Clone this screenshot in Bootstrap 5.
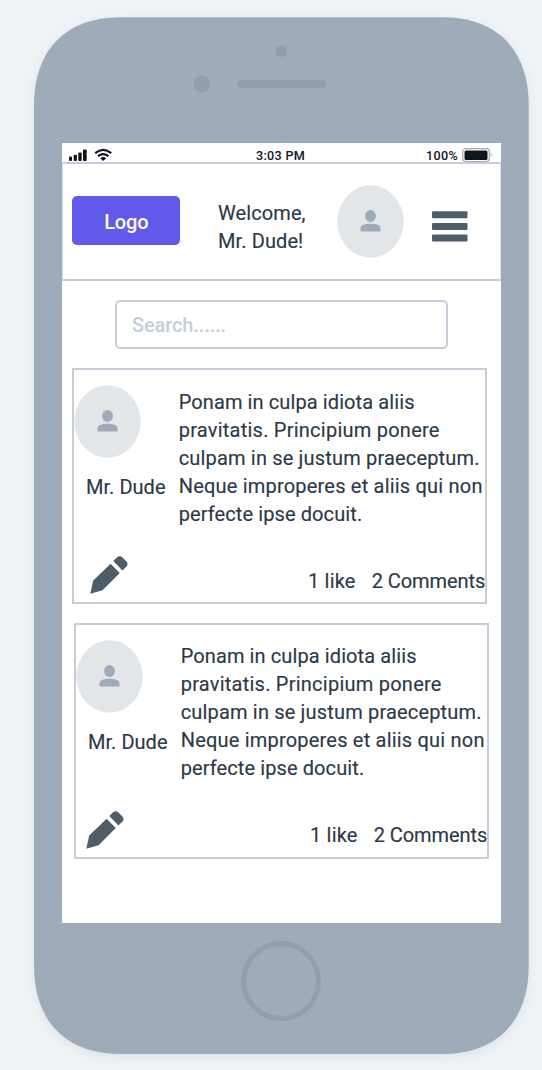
<!DOCTYPE html>
<html lang="en">
<head>
<meta charset="utf-8">
<meta name="viewport" content="width=device-width, initial-scale=1">
<title>Feed wireframe</title>
<link href="https://cdn.jsdelivr.net/npm/bootstrap@5.3.0/dist/css/bootstrap.min.css" rel="stylesheet">
<style>
body{background:#eff3f6;font-family:Roboto,"Liberation Sans",sans-serif;color:#2c3947;font-size:20px;line-height:28px;letter-spacing:.1px;overflow:hidden}
.page{height:1070px;padding:17px 13px 16px 34px}
.phone{height:1037px;padding:0 28px}
.shell{left:0;top:0;width:495px;height:1037px;overflow:visible;filter:drop-shadow(0 3px 5px rgba(60,70,80,.09))}
.earpiece{height:126px;margin:0 -28px}
.screen{height:780px;width:439px}
.status{height:19px;font-size:12.6px;line-height:25px;font-weight:500;color:#10161e;letter-spacing:.3px;padding:0 8px 0 7px}
.topbar{height:119px;border:2px solid #c5ceda;border-left:1px solid #d5dce4;border-right:1px solid #dfe4e9;padding:0 0 0 9.3px}
.logo-btn{width:108px;height:49px;margin-top:32px;padding:2px 0 0;background:#6259ea;border-radius:5px;color:#fff;font-size:20px;font-weight:500;line-height:28px;letter-spacing:-.2px}
.welcome{margin:35px 0 0 37.7px;width:118.7px}
.ink{-webkit-text-stroke:.15px #2c3947}
.avatar{width:67px;height:73px;flex:none}
.menu-icon{width:36px;height:31px;margin:47px 0 0 28px}
.search{width:333px;height:49px;margin:19px 0 0 53.4px;border:2px solid #c5ceda;border-radius:5px;padding:0 14.500px;font-size:20px;font-weight:500;letter-spacing:-.1px;color:#2c3947}
.search::placeholder{color:#c5ceda;opacity:1}
.post{width:415px;height:236px;border:2px solid #c5ceda;margin:19px 0 0 10.4px}
.post + .post{margin-left:12.4px}
.author{width:104.3px;flex:none}
.author .avatar{margin:15px 0 0 -.6px}
.author-name{margin:15px 0 0 11.6px;letter-spacing:.03px}
.post-text{padding-top:18px}
.post + .post .post-text{padding-top:17px}
.post-text span{display:block;white-space:nowrap}
.post-text span:nth-child(2){letter-spacing:.24px}
.post-text span:nth-child(3){letter-spacing:.17px}
.post-text span:nth-child(4){letter-spacing:.2px}
.edit-icon{width:38px;height:38px;margin:-6px 0 0 15.500px}
.post + .post .edit-icon{margin:-7px 0 0 9.500px}
.counts{gap:16px;margin-bottom:7px;letter-spacing:-.05px}
.post + .post .counts{margin-bottom:8px}
.likes{letter-spacing:.2px}
.home-btn{width:80px;height:80px;border:5px solid #929eaa;margin:17.500px 0 0 179.400px}
</style>
</head>
<body>
<svg class="d-none">
  <symbol id="user" viewBox="0 0 67 73"><ellipse cx="33.5" cy="36.5" rx="33.2" ry="36.2" fill="#e2e6e9"/><g fill="#a0abb9"><ellipse cx="33.5" cy="31" rx="5.4" ry="6"/><path d="M23.5 46.5v-3.6c0-3 5-4.2 10-4.2s10 1.200 10 4.200v3.600z"/></g></symbol>
  <symbol id="pencil" viewBox="0 0 38 38"><path fill="#4f5d6b" d="M.3 37.700 3.200 24.600 20.600 7.700 29.800 16.900 12.600 34.200zM23.300 5 26.800 1.500Q29.700-1 32.500 1.500L36 5Q38.800 8 36.500 10.600L32.400 14.400z"/></symbol>
</svg>
<main class="page">
  <div class="phone position-relative">
    <svg class="shell position-absolute" viewBox="0 0 495 1037"><path fill="#a0abb9" d="M0 88C0 33 32 .3 86 .3H409C463 .3 494.700 33 494.700 88V949C494.700 1004 463 1037 409 1037H86C32 1037 0 1004 0 949z"/></svg>
    <div class="earpiece position-relative">
      <svg width="495" height="126" class="d-block" fill="#929eaa"><circle cx="247.200" cy="34.200" r="5.900"/><circle cx="167.900" cy="67" r="8.300"/><rect x="203" y="63" width="89" height="8" rx="4"/></svg>
    </div>
    <section class="screen bg-white position-relative">
      <div class="status d-flex justify-content-between position-relative">
        <svg width="46" height="18" fill="#10161e"><rect y="13.500" width="3" height="4.500" rx="1"/><rect x="4.700" y="11.800" width="3.200" height="6.200" rx="1"/><rect x="9.300" y="9.500" width="3.400" height="8.500" rx="1"/><rect x="14" y="6.500" width="3.700" height="11.500" rx="1"/><g fill="none" stroke="#10161e" stroke-width="2.200"><path d="M26.200 10.200Q34.200 3.500 42.200 10.200M29 13.200Q34.200 9 39.400 13.200"/></g><path d="M31.200 15.200Q34.200 13 37.200 15.200L34.200 18z"/></svg>
        <span class="ps-3 ms-1">3:03 PM</span>
        <span class="d-flex"><span>100%</span><svg class="ms-1" width="31" height="20"><rect x=".8" y="5.700" width="26.500" height="12.800" rx="3" fill="none" stroke="#a5a9ae" stroke-width="1.200"/><rect x="2.500" y="7.500" width="23" height="9.500" rx="1.500" fill="#10161e"/><path d="M28.700 9.500q2.200 2.500 0 5z" fill="#a5a9ae"/></svg></span>
      </div>
      <header class="topbar d-flex align-items-start">
        <button class="btn logo-btn border-0">Logo</button>
        <div class="welcome ink">Welcome,<br>Mr. Dude!</div>
        <svg class="avatar" style="margin-top:21px"><use href="#user"/></svg>
        <svg class="menu-icon" fill="#4f5d6b"><rect y=".2" width="35.500" height="7" rx="1"/><rect y="11.900" width="35.500" height="7" rx="1"/><rect y="23.500" width="35.500" height="7" rx="1"/></svg>
      </header>
      <input class="search d-block" type="text" placeholder="Search......" aria-label="Search">
      <article class="post ink d-flex flex-column">
        <div class="d-flex flex-grow-1">
          <div class="author"><svg class="avatar d-block"><use href="#user"/></svg><div class="author-name">Mr. Dude</div></div>
          <div class="post-text"><span>Ponam in culpa idiota aliis</span><span>pravitatis. Principium ponere</span><span>culpam in se justum praeceptum.</span><span>Neque improperes et aliis qui non</span><span>perfecte ipse docuit.</span></div>
        </div>
        <div class="d-flex justify-content-between align-items-end">
          <svg class="edit-icon mb-2"><use href="#pencil"/></svg>
          <div class="counts d-flex"><span class="likes">1 like</span><span>2 Comments</span></div>
        </div>
      </article>
      <article class="post ink d-flex flex-column">
        <div class="d-flex flex-grow-1">
          <div class="author"><svg class="avatar d-block"><use href="#user"/></svg><div class="author-name">Mr. Dude</div></div>
          <div class="post-text"><span>Ponam in culpa idiota aliis</span><span>pravitatis. Principium ponere</span><span>culpam in se justum praeceptum.</span><span>Neque improperes et aliis qui non</span><span>perfecte ipse docuit.</span></div>
        </div>
        <div class="d-flex justify-content-between align-items-end">
          <svg class="edit-icon mb-2"><use href="#pencil"/></svg>
          <div class="counts d-flex"><span class="likes">1 like</span><span>2 Comments</span></div>
        </div>
      </article>
    </section>
    <div class="home-btn rounded-circle position-relative"></div>
  </div>
</main>
<script src="https://cdn.jsdelivr.net/npm/bootstrap@5.3.0/dist/js/bootstrap.bundle.min.js"></script>
</body>
</html>
